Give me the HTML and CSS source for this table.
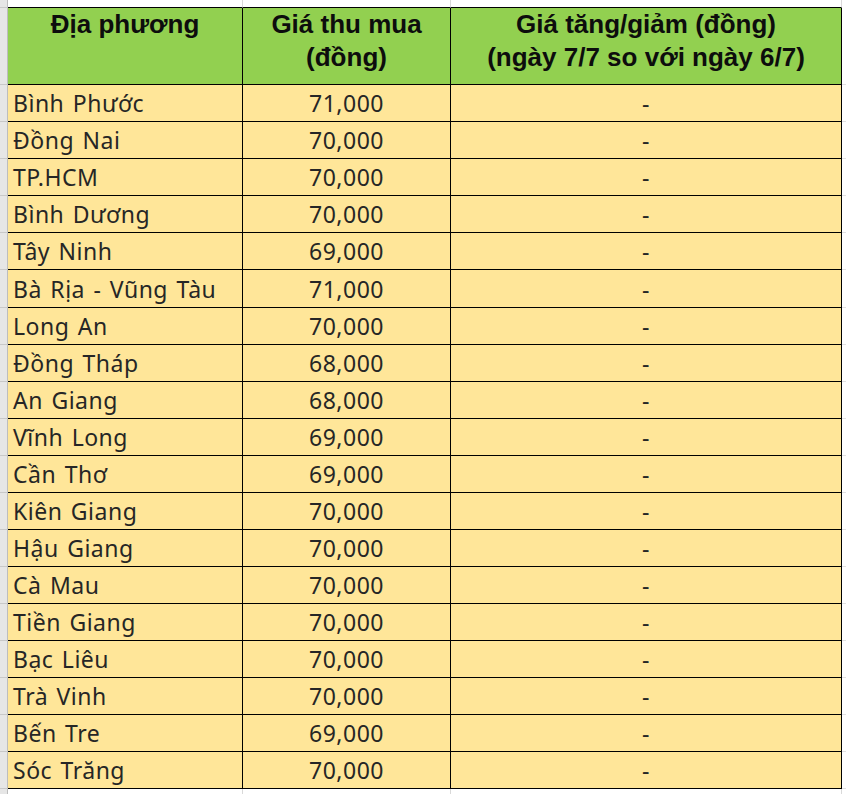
FILE: index.html
```html
<!DOCTYPE html>
<html lang="vi">
<head>
<meta charset="utf-8">
<title>Giá thu mua</title>
<link rel="stylesheet" href="styles.css">
</head>
<body>
<table class="sheet">
  <colgroup>
    <col class="c-rh"><col class="c-1"><col class="c-2"><col class="c-3"><col class="c-x">
  </colgroup>
  <tr class="top">
    <td class="rh"></td><td class="g"></td><td class="g"></td><td class="g"></td><td></td>
  </tr>
  <tr class="head">
    <td class="rh"></td>
    <th>Địa phương</th>
    <th>Giá thu mua<br>(đồng)</th>
    <th>Giá tăng/giảm (đồng)<br>(ngày 7/7 so với ngày 6/7)</th>
    <td class="x"></td>
  </tr>
  <tr class="row"><td class="rh"></td><td class="name">Bình Phước</td><td class="num">71,000</td><td class="chg">-</td><td class="x"></td></tr>
  <tr class="row"><td class="rh"></td><td class="name">Đồng Nai</td><td class="num">70,000</td><td class="chg">-</td><td class="x"></td></tr>
  <tr class="row"><td class="rh"></td><td class="name">TP.HCM</td><td class="num">70,000</td><td class="chg">-</td><td class="x"></td></tr>
  <tr class="row"><td class="rh"></td><td class="name">Bình Dương</td><td class="num">70,000</td><td class="chg">-</td><td class="x"></td></tr>
  <tr class="row"><td class="rh"></td><td class="name">Tây Ninh</td><td class="num">69,000</td><td class="chg">-</td><td class="x"></td></tr>
  <tr class="row tall"><td class="rh"></td><td class="name">Bà Rịa - Vũng Tàu</td><td class="num">71,000</td><td class="chg">-</td><td class="x"></td></tr>
  <tr class="row"><td class="rh"></td><td class="name">Long An</td><td class="num">70,000</td><td class="chg">-</td><td class="x"></td></tr>
  <tr class="row"><td class="rh"></td><td class="name">Đồng Tháp</td><td class="num">68,000</td><td class="chg">-</td><td class="x"></td></tr>
  <tr class="row"><td class="rh"></td><td class="name">An Giang</td><td class="num">68,000</td><td class="chg">-</td><td class="x"></td></tr>
  <tr class="row"><td class="rh"></td><td class="name">Vĩnh Long</td><td class="num">69,000</td><td class="chg">-</td><td class="x"></td></tr>
  <tr class="row"><td class="rh"></td><td class="name">Cần Thơ</td><td class="num">69,000</td><td class="chg">-</td><td class="x"></td></tr>
  <tr class="row"><td class="rh"></td><td class="name">Kiên Giang</td><td class="num">70,000</td><td class="chg">-</td><td class="x"></td></tr>
  <tr class="row"><td class="rh"></td><td class="name">Hậu Giang</td><td class="num">70,000</td><td class="chg">-</td><td class="x"></td></tr>
  <tr class="row"><td class="rh"></td><td class="name">Cà Mau</td><td class="num">70,000</td><td class="chg">-</td><td class="x"></td></tr>
  <tr class="row"><td class="rh"></td><td class="name">Tiền Giang</td><td class="num">70,000</td><td class="chg">-</td><td class="x"></td></tr>
  <tr class="row"><td class="rh"></td><td class="name">Bạc Liêu</td><td class="num">70,000</td><td class="chg">-</td><td class="x"></td></tr>
  <tr class="row"><td class="rh"></td><td class="name">Trà Vinh</td><td class="num">70,000</td><td class="chg">-</td><td class="x"></td></tr>
  <tr class="row"><td class="rh"></td><td class="name">Bến Tre</td><td class="num">69,000</td><td class="chg">-</td><td class="x"></td></tr>
  <tr class="row"><td class="rh"></td><td class="name">Sóc Trăng</td><td class="num">70,000</td><td class="chg">-</td><td class="x"></td></tr>
  <tr class="bottom"><td class="rh"></td><td class="g"></td><td class="g"></td><td class="g"></td><td></td></tr>
</table>
</body>
</html>
```

FILE: styles.css
```css
html, body {
  margin: 0;
  padding: 0;
  background: #ffffff;
  overflow: hidden;
}

.sheet {
  border-collapse: separate;
  border-spacing: 0;
  table-layout: fixed;
  width: 846px;
}

.c-rh { width: 8px; }
.c-1 { width: 235px; }
.c-2 { width: 208px; }
.c-3 { width: 391px; }
.c-x { width: 4px; }

.sheet td, .sheet th {
  padding: 0;
  margin: 0;
  overflow: hidden;
  white-space: nowrap;
}

.rh {
  background: #e6e6e6;
  border-right: 1px solid #bdbdbd;
  border-bottom: 1px solid #c8c8c8;
}

.top td { height: 7px; }
.top td.g {
  border-right: 1px solid #d9d9d9;
  border-bottom: 1px solid #000;
}
.top td.rh { border-bottom: 1px solid #c8c8c8; }

.head th {
  height: 76px;
  background: #92d050;
  border-right: 1px solid #000;
  border-bottom: 1px solid #000;
  font-family: "Liberation Sans", Arial, sans-serif;
  font-weight: bold;
  font-size: 26px;
  line-height: 33px;
  color: #0d0d0d;
  text-align: center;
  vertical-align: top;
}

.row td {
  height: 36px;
  font-family: "Noto Sans", "Open Sans", sans-serif;
  font-size: 23px;
  letter-spacing: 0.5px;
  word-spacing: 2px;
  line-height: 36px;
  color: #262626;
  vertical-align: middle;
}
.row.tall td { height: 37px; }

.row td.name, .row td.num, .row td.chg {
  background: #ffe699;
  border-right: 1px solid #000;
  border-bottom: 1px solid #000;
}

.name { padding-left: 5px !important; text-align: left; }
.num { text-align: center; }
.chg { text-align: center; }

.x {
  background: #fff;
  border-bottom: 1px solid #e0e0e0;
}

.bottom td { height: 6px; }
.bottom td.g { border-right: 1px solid #d9d9d9; }
```
